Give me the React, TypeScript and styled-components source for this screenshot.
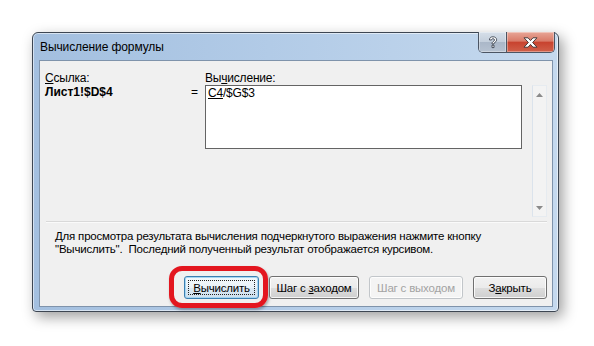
import styled, { createGlobalStyle } from "styled-components";

const GlobalStyle = createGlobalStyle`
  html, body {
    margin: 0;
    padding: 0;
    background: #ffffff;
  }
  body {
    font-family: "Liberation Sans", Arial, sans-serif;
    font-size: 11.5px;
    letter-spacing: -0.2px;
    color: #000;
  }
`;

const Page = styled.div`
  width: 594px;
  height: 346px;
  box-sizing: border-box;
  padding: 32px 0 0 32px;
`;

const Window = styled.div`
  width: 527px;
  height: 280px;
  box-sizing: border-box;
  display: flex;
  flex-direction: column;
  border: 1px solid #3d4652;
  border-radius: 6px 6px 4px 4px;
  background: linear-gradient(90deg, #a3bfdf 0%, #b2cbe7 45%, #c5d9ee 100%);
  box-shadow: 4px 5px 14px rgba(0, 0, 0, 0.38), inset 0 0 0 1px rgba(255, 255, 255, 0.55);
`;

const TitleBar = styled.div`
  display: flex;
  align-items: flex-start;
  height: 27px;
  flex: none;
`;

const Title = styled.div`
  flex: 1;
  padding-left: 7px;
  line-height: 28px;
  font-size: 12px;
  letter-spacing: -0.1px;
  color: #000;
`;

const Controls = styled.div`
  display: flex;
  margin: -1px 3px 0 0;
  height: 20px;
  border: 1px solid #4b5563;
  border-top: none;
  border-radius: 0 0 5px 5px;
  overflow: hidden;
`;

const CaptionButton = styled.div<{ $kind: "help" | "close" }>`
  display: flex;
  align-items: center;
  justify-content: center;
  width: ${(p) => (p.$kind === "help" ? "27px" : "47px")};
  background: ${(p) =>
    p.$kind === "help"
      ? "linear-gradient(#d6dfe9 0%, #c3cedb 50%, #aab7c8 51%, #b6c2d1 100%)"
      : "linear-gradient(#e8a697 0%, #d97b69 45%, #c8432f 52%, #d0604a 100%)"};
  border-left: ${(p) => (p.$kind === "close" ? "1px solid #4b5563" : "none")};
  box-shadow: inset 0 0 0 1px rgba(255, 255, 255, 0.35);
`;

const Client = styled.div`
  flex: 1;
  margin: 0 5px 4px 6px;
  border: 1px solid #7f93ab;
  background: #f0f0f0;
  padding: 10px 5px 7px 5px;
  display: flex;
  flex-direction: column;
`;

const TopGrid = styled.div`
  display: grid;
  grid-template-columns: 144px 16px 317px 1fr 15px;
  grid-template-rows: 14px 132px;
  line-height: 14px;
`;

const Label = styled.div<{ $col: number }>`
  grid-column: ${(p) => p.$col};
  grid-row: 1;
  font-size: 12px;
  white-space: nowrap;
`;

const RefText = styled.div`
  grid-column: 1;
  grid-row: 2;
  font-size: 12px;
  letter-spacing: 0;
  font-weight: bold;
`;

const Equals = styled.div`
  grid-column: 2;
  grid-row: 2;
  padding-left: 2px;
  font-size: 12px;
`;

const EvalBox = styled.div`
  grid-column: 3;
  grid-row: 2;
  height: 64px;
  box-sizing: border-box;
  border: 1px solid #646464;
  background: #fff;
  padding: 0 2px;
  font-size: 12px;
`;

const ScrollTrack = styled.div`
  grid-column: 5;
  grid-row: 2;
  display: flex;
  flex-direction: column;
  justify-content: space-between;
  align-items: center;
  box-sizing: border-box;
  border: 1px solid #e6ebf0;
  border-left-color: #dbe3ec;
  background: #f3f3f3;
  padding: 7px 0 6px;
`;

const U = styled.span`
  text-decoration: underline;
`;

const Separator = styled.div`
  height: 1px;
  margin: 4px 0 0 1px;
  background: #d9d9d9;
  box-shadow: 0 1px 0 #fafafa;
`;

const Description = styled.p`
  margin: 8px 0 0;
  padding-left: 10px;
  line-height: 13px;
`;

const ButtonRow = styled.div`
  display: flex;
  justify-content: flex-end;
  gap: 10px;
  margin-top: 20px;
`;

const Button = styled.div<{ $w: number; $focused?: boolean; $disabled?: boolean }>`
  position: relative;
  width: ${(p) => p.$w}px;
  height: 23px;
  box-sizing: border-box;
  display: flex;
  align-items: center;
  justify-content: center;
  border-radius: 3px;
  border: 1px solid
    ${(p) => (p.$focused ? "#3c7fb1" : p.$disabled ? "#c2c6ca" : "#707070")};
  background: ${(p) =>
    p.$disabled
      ? "#f4f4f4"
      : p.$focused
      ? "linear-gradient(#f4f9fc 0%, #e9f2f8 50%, #dbe8f2 51%, #cfe0ee 100%)"
      : "linear-gradient(#f2f2f2 0%, #ebebeb 50%, #dddddd 51%, #cfcfcf 100%)"};
  box-shadow: inset 0 0 0 1px
    ${(p) => (p.$focused ? "#a6d6f2" : "rgba(255, 255, 255, 0.8)")};
  color: ${(p) => (p.$disabled ? "#a3a3a3" : "#000")};
  white-space: nowrap;
`;

const FocusRect = styled.div`
  position: absolute;
  inset: 3px;
  border: 1px dotted #222;
`;

const Highlight = styled.div`
  position: absolute;
  left: -16px;
  top: -11px;
  width: 99px;
  height: 42px;
  box-sizing: border-box;
  border: 5px solid #e3161f;
  border-radius: 13px;
  box-shadow: 1px 2px 3px rgba(0, 0, 0, 0.3);
  pointer-events: none;
`;

const HelpIcon = () => (
  <svg width="10" height="13" viewBox="0 0 10 13">
    <path
      d="M1.5 4 C1.5 1.5 3 0.8 5 0.8 C7.2 0.8 8.6 2 8.6 3.8 C8.6 5.4 7.5 6 6.5 6.6 C6 6.9 6 7.3 6 8 L4 8 C4 6.8 4.3 6.2 5.2 5.6 C6 5.1 6.5 4.7 6.5 3.9 C6.5 3.1 5.9 2.7 5 2.7 C4 2.7 3.6 3.2 3.6 4 Z M4 9.2 L6 9.2 L6 11.6 L4 11.6 Z"
      fill="#fff"
      stroke="#3c4450"
      strokeWidth="0.9"
    />
  </svg>
);

const CloseIcon = () => (
  <svg width="15" height="11" viewBox="0 0 15 11">
    <path
      d="M1 0.8 L5 0.8 L7.5 3.6 L10 0.8 L14 0.8 L9.6 5.5 L14 10.2 L10 10.2 L7.5 7.4 L5 10.2 L1 10.2 L5.4 5.5 Z"
      fill="#fff"
      stroke="#3a3030"
      strokeWidth="0.9"
    />
  </svg>
);

const Arrow = ({ down }: { down?: boolean }) => (
  <svg width="7" height="4" viewBox="0 0 7 4">
    <path d={down ? "M0 0 L7 0 L3.5 4 Z" : "M3.5 0 L7 4 L0 4 Z"} fill="#8a8a8a" />
  </svg>
);

export default function App() {
  return (
    <>
      <GlobalStyle />
      <Page>
        <Window>
          <TitleBar>
            <Title>Вычисление формулы</Title>
            <Controls>
              <CaptionButton $kind="help">
                <HelpIcon />
              </CaptionButton>
              <CaptionButton $kind="close">
                <CloseIcon />
              </CaptionButton>
            </Controls>
          </TitleBar>
          <Client>
            <TopGrid>
              <Label $col={1}>
                <U>С</U>сылка:
              </Label>
              <Label $col={3}>
                Вы<U>ч</U>исление:
              </Label>
              <RefText>Лист1!$D$4</RefText>
              <Equals>=</Equals>
              <EvalBox>
                <U>C4</U>/$G$3
              </EvalBox>
              <ScrollTrack>
                <Arrow />
                <Arrow down />
              </ScrollTrack>
            </TopGrid>
            <Separator />
            <Description>
              Для просмотра результата вычисления подчеркнутого выражения нажмите кнопку
              <br />
              "Вычислить".&nbsp; Последний полученный результат отображается курсивом.
            </Description>
            <ButtonRow>
              <Button $w={75} $focused>
                <FocusRect />
                <span>
                  <U>В</U>ычислить
                </span>
                <Highlight />
              </Button>
              <Button $w={90}>
                <span>
                  Шаг с <U>з</U>аходом
                </span>
              </Button>
              <Button $w={94} $disabled>
                Шаг с выходом
              </Button>
              <Button $w={74}>
                <span>
                  З<U>а</U>крыть
                </span>
              </Button>
            </ButtonRow>
          </Client>
        </Window>
      </Page>
    </>
  );
}
